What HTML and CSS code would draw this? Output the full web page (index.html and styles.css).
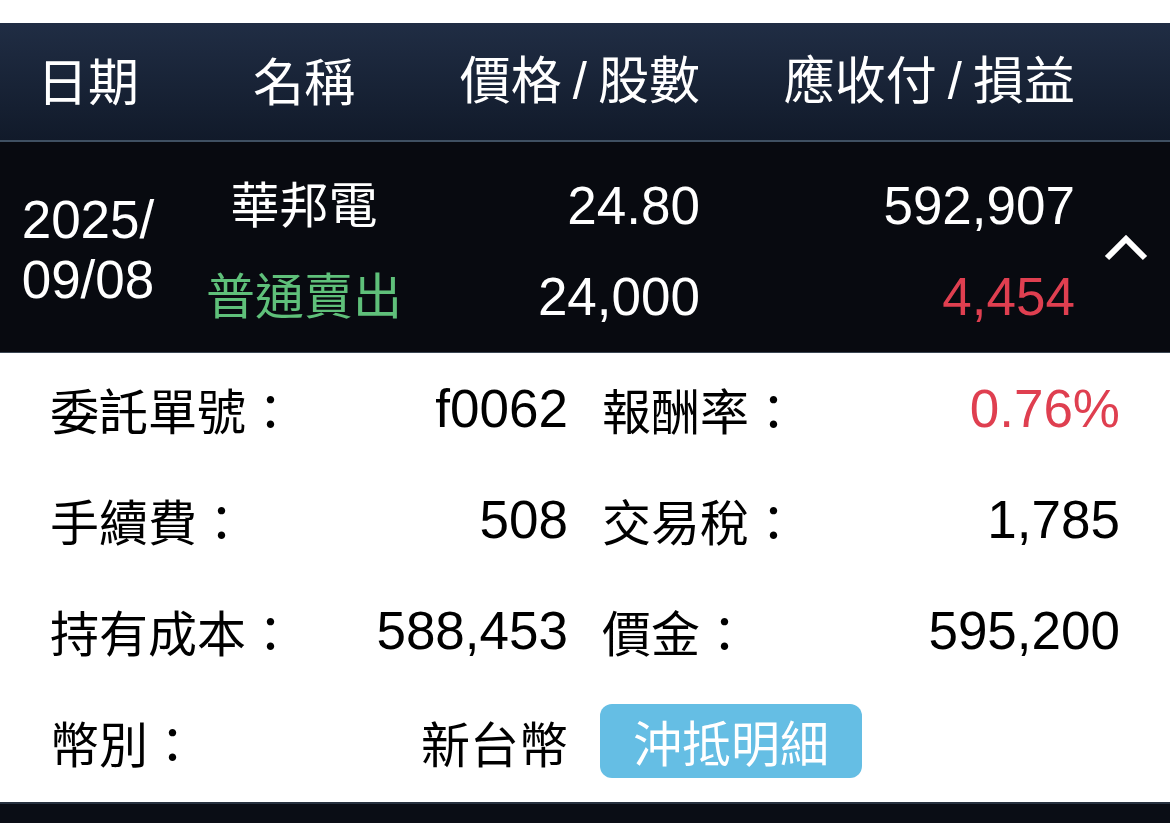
FILE: index.html
```html
<!DOCTYPE html>
<html lang="zh-Hant">
<head>
<meta charset="utf-8">
<title>交易明細</title>
<link rel="stylesheet" href="styles.css">
</head>
<body>
<div class="top-gap"></div>
<div class="thead grid">
  <div class="c-date">日期</div>
  <div class="c-name">名稱</div>
  <div class="c-price">價格<span class="sl">/</span>股數</div>
  <div class="c-amt">應收付<span class="sl">/</span>損益</div>
  <div></div>
</div>
<div class="trow grid">
  <div class="c-date date">
    <div>2025/</div>
    <div>09/08</div>
  </div>
  <div class="c-name two">
    <div class="cjk">華邦電</div>
    <div class="cjk green">普通賣出</div>
  </div>
  <div class="c-price two nums">
    <div class="num">24.80</div>
    <div class="num">24,000</div>
  </div>
  <div class="c-amt two nums">
    <div class="num">592,907</div>
    <div class="num red">4,454</div>
  </div>
  <div class="c-chev">
    <svg class="chev" width="44" height="27" viewBox="0 0 44 27"><polyline points="3,24 22,5 41,24" fill="none" stroke="#fff" stroke-width="6"/></svg>
  </div>
</div>
<div class="detail">
  <div class="cell"><span class="lbl">委託單號：</span><span class="num">f0062</span></div>
  <div class="cell"><span class="lbl">報酬率：</span><span class="num red">0.76%</span></div>
  <div class="cell"><span class="lbl">手續費：</span><span class="num">508</span></div>
  <div class="cell"><span class="lbl">交易稅：</span><span class="num">1,785</span></div>
  <div class="cell"><span class="lbl">持有成本：</span><span class="num">588,453</span></div>
  <div class="cell"><span class="lbl">價金：</span><span class="num">595,200</span></div>
  <div class="cell"><span class="lbl">幣別：</span><span class="lbl">新台幣</span></div>
  <div class="cell start"><span class="btn">沖抵明細</span></div>
</div>
<div class="bottom"></div>
</body>
</html>
```
FILE: styles.css
```css
html, body {
  margin: 0;
  padding: 0;
  background: #ffffff;
  font-family: "Liberation Sans", "Noto Sans CJK TC", sans-serif;
  overflow: hidden;
}

.top-gap {
  height: 23px;
}

.grid {
  display: grid;
  grid-template-columns: 176px 256px 268px 375px 95px;
  align-items: center;
}

.thead {
  height: 109px;
  padding-bottom: 8px;
  background: linear-gradient(#202d44, #111a2a);
  border-bottom: 2px solid #3f5062;
  color: #ffffff;
  font-family: "Noto Sans CJK TC", sans-serif;
  font-size: 51px;
  line-height: 109px;
}

.sl {
  font-family: "Liberation Sans", sans-serif;
  padding: 0 11px;
}

.c-date { text-align: center; }
.c-name { text-align: center; }
.c-price { text-align: right; }
.c-amt { text-align: right; }
.c-chev {
  display: flex;
  justify-content: center;
  padding-left: 7px;
}

.trow {
  height: 210px;
  background: #080a10;
  border-bottom: 1px solid #3a4552;
  color: #ffffff;
}

.date {
  font-size: 53px;
  line-height: 60px;
  padding-top: 6px;
}

.two {
  line-height: 91px;
}

.two.nums {
  padding-top: 8px;
}

.cjk {
  font-family: "Noto Sans CJK TC", sans-serif;
  font-size: 49px;
}

.num {
  font-family: "Liberation Sans", sans-serif;
  font-size: 53px;
}

.green { color: #5fc07a; }
.red { color: #df3f50; }

.chev { display: block; }

.detail {
  display: grid;
  grid-template-columns: 1fr 1fr;
  grid-auto-rows: 111px;
  column-gap: 34px;
  padding: 0 50px 5px;
  color: #000000;
}

.cell {
  display: flex;
  align-items: center;
  justify-content: space-between;
}

.cell.start {
  justify-content: flex-start;
}

.lbl {
  font-family: "Noto Sans CJK TC", sans-serif;
  font-size: 49px;
}

.btn {
  display: inline-flex;
  align-items: center;
  justify-content: center;
  height: 74px;
  padding: 0 33px;
  margin-left: -2px;
  margin-top: -2px;
  border-radius: 12px;
  background: #65bee4;
  color: #ffffff;
  font-family: "Noto Sans CJK TC", sans-serif;
  font-size: 49px;
}

.bottom {
  height: 21px;
  background: #0a0d15;
  border-top: 2px solid #27313f;
}
```
